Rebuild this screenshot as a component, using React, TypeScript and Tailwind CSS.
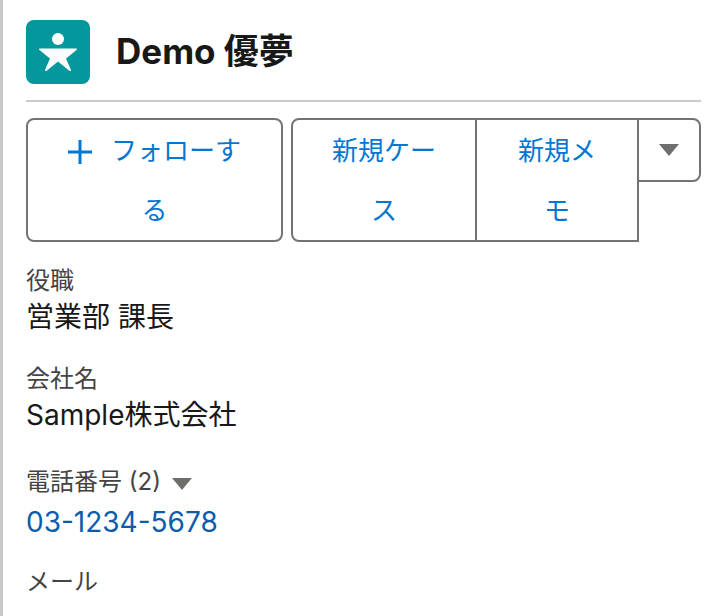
import React from "react";

function Caret({ className }: { className: string }) {
  return (
    <svg viewBox="0 0 20 12" className={className} fill="#706e6b">
      <path d="M0 0h20L10 12z" />
    </svg>
  );
}

function Label({ children }: { children: React.ReactNode }) {
  return <div className="text-[24px] leading-[34px] text-[#444444]">{children}</div>;
}

function Value({ children, link }: { children: React.ReactNode; link?: boolean }) {
  return (
    <div className={`text-[28px] leading-[38px] ${link ? "text-[#0b5cab]" : "text-[#181818]"}`}>{children}</div>
  );
}

export default function App() {
  return (
    <div className="w-[720px] h-[616px] overflow-hidden bg-white border-l-[3px] border-[#c9c9c9] pl-[23px] pr-[19px] font-['Inter','Noto_Sans_CJK_JP',sans-serif]">
      <div className="h-[102px] flex items-start gap-[26px] border-b-2 border-[#c9c9c9] pt-[20px]">
        <div className="w-[64px] h-[64px] rounded-[8px] bg-[#04989c] shrink-0">
          <svg viewBox="0 0 64 64" className="w-[64px] h-[64px]" fill="#fff">
            <circle cx="32" cy="19" r="6" />
            <path d="M13.500 30c-.8-.8-.5-1.500.5-1.500h36c1 0 1.300.7.5 1.500L40 38.500l4.800 11c.5 1.300-.4 1.900-1.500 1.300L32 41.500l-11.300 9.300c-1.100.6-2-.0-1.500-1.300l4.800-11z" />
          </svg>
        </div>
        <div className="text-[35px] leading-[62px] font-bold text-[#181818]">Demo 優夢</div>
      </div>
      <div className="flex items-start mt-[16px] mb-[22px] text-[26px] text-[#0176d3]">
        <div className="w-[257px] h-[124px] border-2 border-[#747474] rounded-[8px] text-center leading-[60px] flex flex-col pt-[1px]">
          <div className="flex justify-center items-center h-[60px] gap-[19px]">
            <svg viewBox="0 0 24 24" className="w-[24px] h-[24px] mt-[1px]" fill="#0176d3"><path d="M10.500 0h3v10.500H24v3H13.500V24h-3V13.500H0v-3h10.500z" /></svg>
            <span>フォローす</span>
          </div>
          <div>る</div>
        </div>
        <div className="ml-[8px] w-[186px] h-[124px] border-2 border-[#747474] rounded-l-[8px] text-center leading-[60px] pt-[1px]">新規ケー<br />ス</div>
        <div className="-ml-[2px] w-[164px] h-[124px] border-2 border-[#747474] text-center leading-[60px] pt-[1px]">新規メ<br />モ</div>
        <div className="-ml-[2px] w-[64px] h-[64px] border-2 border-[#747474] rounded-r-[8px] flex items-center justify-center">
          <Caret className="w-[20px] h-[12px]" />
        </div>
      </div>
      <div className="mb-[26px]">
        <Label>役職</Label>
        <Value>営業部 課長</Value>
      </div>
      <div className="mb-[31px]">
        <Label>会社名</Label>
        <Value>Sample株式会社</Value>
      </div>
      <div className="mb-[24px]">
        <div className="flex items-center gap-[11px] text-[24px] leading-[34px] text-[#444444]">
          <span>電話番号 (2)</span>
          <Caret className="w-[20px] h-[12px] mt-[3px]" />
        </div>
        <div className="mt-[4px]">
          <Value link>03-1234-5678</Value>
        </div>
      </div>
      <Label>メール</Label>
    </div>
  );
}
